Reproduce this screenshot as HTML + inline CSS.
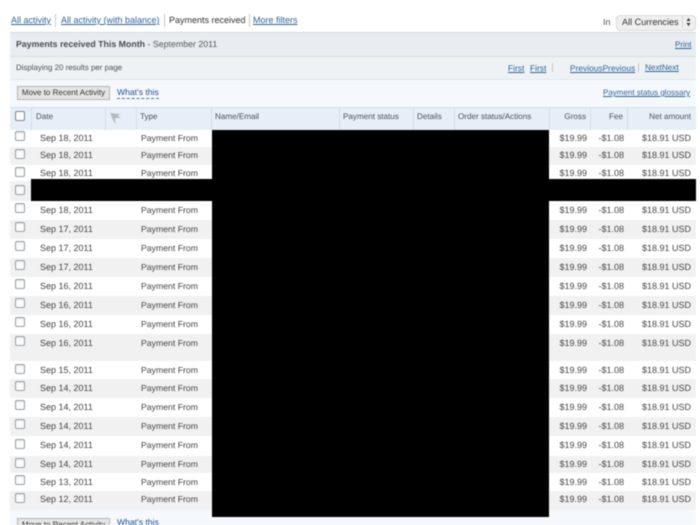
<!DOCTYPE html>
<html>
<head>
<meta charset="utf-8">
<style>
html,body{margin:0;padding:0;width:700px;height:525px;overflow:hidden;background:#fff}
body{font-family:"Liberation Sans",sans-serif;font-size:9px;color:#444;position:relative;text-rendering:geometricPrecision}
#w{position:absolute;left:0;top:0;width:700px;height:525px;overflow:hidden;filter:blur(.45px)}
.a{position:absolute;white-space:nowrap;line-height:12px}
.l{color:#2d6299;text-decoration:underline}
.b{position:absolute;left:10px;width:686px}
.v{position:absolute;top:107px;width:1px;height:23px;background:#d3dee8}
.s{position:absolute;width:1px;background:#c4c8cb}
.r{position:absolute;left:10px;width:686px}
.r span{position:absolute;line-height:12px;white-space:nowrap;top:50%;margin-top:-7px}
.r i{position:absolute;left:5px;top:50%;margin-top:-8px;width:8px;height:8px;border:1px solid #979fa5;border-radius:2px;background:#fbfbfb;box-shadow:inset 0 1px 1px #e2e2e2}
.r.u span{margin-top:-6px}
.r.m span{margin-top:-8px}
.d{left:30px}.t{left:131px;width:60px;font-size:8.7px}
.g{right:109px}.f{right:72px}.n{right:5px}
.e{background:#f1f1f1}
.h{color:#4a5058;font-size:8.1px}
.btn{position:absolute;left:17px;width:91px;height:12px;background:#e5e5e5;border:1px solid #b5b5b5;color:#333;font-size:8px;line-height:12px;text-align:center;white-space:nowrap}
.w{position:absolute;left:117px;color:#26508f;font-size:8.6px;line-height:11px;white-space:nowrap}
</style>
</head>
<body>
<div id="w">
<span class="a l" style="left:11px;top:14px">All activity</span>
<div class="s" style="left:55px;top:14px;height:13px"></div>
<span class="a l" style="left:61px;top:14px">All activity (with balance)</span>
<div class="s" style="left:164px;top:14px;height:13px"></div>
<span class="a" style="left:169px;top:14px;color:#333">Payments received</span>
<div class="s" style="left:249px;top:14px;height:13px"></div>
<span class="a l" style="left:253px;top:14px">More filters</span>
<span class="a" style="left:603px;top:16px;color:#555">In</span>
<div style="position:absolute;left:616px;top:15px;width:78px;height:14px;background:#efefef;border:1px solid #dcdcdc;border-radius:4px"></div>
<span class="a" style="left:622px;top:16px;color:#333;font-size:9.1px">All Currencies</span>
<div class="s" style="left:682px;top:16px;height:12px;background:#d5d5d5"></div>
<svg style="position:absolute;left:686px;top:17px" width="5" height="10" viewBox="0 0 5 10"><path d="M.5 4 2.500 1 4.500 4zM.5 6 2.500 9 4.500 6z" fill="#333"/></svg>

<div class="b" style="top:32px;height:24px;background:#e9edf1;border-top:1px solid #d6dadd;box-sizing:border-box"></div>
<div class="b" style="top:56px;height:23px;background:#eef2f5;border-top:1px solid #d8dde0;box-sizing:border-box"></div>
<div class="b" style="top:79px;height:28px;background:#f5f9fd;border-top:1px solid #dfe5e9;box-sizing:border-box"></div>
<div class="b" style="top:107px;height:23px;background:#e6eff8;border-top:1px solid #d8e1e9;box-sizing:border-box"></div>
<div class="b" style="top:510px;height:15px;background:#f5f9fd"></div>

<span class="a" style="left:16px;top:38px;font-size:8.8px;font-weight:bold;color:#454c52">Payments received This Month <span style="font-weight:normal;color:#555">- September 2011</span></span>
<span class="a l" style="left:675px;top:39px;font-size:8px">Print</span>
<span class="a" style="left:16px;top:62px;font-size:7.9px;color:#4a4f55">Displaying 20 results per page</span>
<span class="a l" style="left:508px;top:62px;font-size:8.4px">First</span>
<span class="a l" style="left:530px;top:62px;font-size:8.4px">First</span>
<div class="s" style="left:552px;top:63px;height:9px"></div>
<span class="a l" style="left:570px;top:62px;font-size:8.4px">PreviousPrevious</span>
<div class="s" style="left:638px;top:63px;height:9px"></div>
<span class="a l" style="left:645px;top:62px;font-size:8.2px">NextNext</span>
<div class="btn" style="top:86px">Move to Recent Activity</div>
<span class="w" style="top:87px;border-bottom:1px dashed #4a72a8">What's this</span>
<span class="a l" style="left:603px;top:87px;font-size:8px">Payment status glossary</span>

<div class="v" style="left:31px"></div><div class="v" style="left:105px"></div><div class="v" style="left:136px"></div><div class="v" style="left:211px"></div><div class="v" style="left:339px"></div><div class="v" style="left:413px"></div><div class="v" style="left:454px"></div><div class="v" style="left:549px"></div><div class="v" style="left:590px"></div><div class="v" style="left:627px"></div>
<div style="position:absolute;left:15px;top:111px;width:8px;height:8px;border:1px solid #7d878e;border-radius:2px;background:#fbfbfb"></div>
<span class="a h" style="left:36px;top:111px">Date</span>
<svg style="position:absolute;left:109px;top:112px" width="13" height="12" viewBox="0 0 13 12"><path d="M1 1 11 2 9 4 11.500 6 6 6 6.500 11 5.500 11z" fill="#b4bbc0"/></svg>
<span class="a h" style="left:140px;top:111px">Type</span>
<span class="a h" style="left:215px;top:111px">Name/Email</span>
<span class="a h" style="left:343px;top:111px">Payment status</span>
<span class="a h" style="left:417px;top:111px">Details</span>
<span class="a h" style="left:458px;top:111px">Order status/Actions</span>
<span class="a h" style="right:114px;top:111px">Gross</span>
<span class="a h" style="right:77px;top:111px">Fee</span>
<span class="a h" style="right:9px;top:111px">Net amount</span>

<div class="r" style="top:130px;height:17px"><i></i><span class="d">Sep 18, 2011</span><span class="t">Payment From</span><span class="g">$19.99</span><span class="f">-$1.08</span><span class="n">$18.91 USD</span></div>
<div class="r e" style="top:147px;height:18px"><i style="margin-top:-7px"></i><span class="d">Sep 18, 2011</span><span class="t">Payment From</span><span class="g">$19.99</span><span class="f">-$1.08</span><span class="n">$18.91 USD</span></div>
<div class="r u" style="top:165px;height:16px"><i style="margin-top:-6px"></i><span class="d">Sep 18, 2011</span><span class="t">Payment From</span><span class="g">$19.99</span><span class="f">-$1.08</span><span class="n">$18.91 USD</span></div>
<div class="r e" style="top:181px;height:20px"><i style="margin-top:-6px"></i></div>
<div class="r" style="top:201px;height:19px"><i></i><span class="d">Sep 18, 2011</span><span class="t">Payment From</span><span class="g">$19.99</span><span class="f">-$1.08</span><span class="n">$18.91 USD</span></div>
<div class="r e" style="top:220px;height:19px"><i></i><span class="d">Sep 17, 2011</span><span class="t">Payment From</span><span class="g">$19.99</span><span class="f">-$1.08</span><span class="n">$18.91 USD</span></div>
<div class="r" style="top:239px;height:19px"><i></i><span class="d">Sep 17, 2011</span><span class="t">Payment From</span><span class="g">$19.99</span><span class="f">-$1.08</span><span class="n">$18.91 USD</span></div>
<div class="r e" style="top:258px;height:19px"><i></i><span class="d">Sep 17, 2011</span><span class="t">Payment From</span><span class="g">$19.99</span><span class="f">-$1.08</span><span class="n">$18.91 USD</span></div>
<div class="r" style="top:277px;height:19px"><i></i><span class="d">Sep 16, 2011</span><span class="t">Payment From</span><span class="g">$19.99</span><span class="f">-$1.08</span><span class="n">$18.91 USD</span></div>
<div class="r e" style="top:296px;height:19px"><i></i><span class="d">Sep 16, 2011</span><span class="t">Payment From</span><span class="g">$19.99</span><span class="f">-$1.08</span><span class="n">$18.91 USD</span></div>
<div class="r" style="top:315px;height:19px"><i></i><span class="d">Sep 16, 2011</span><span class="t">Payment From</span><span class="g">$19.99</span><span class="f">-$1.08</span><span class="n">$18.91 USD</span></div>
<div class="r e" style="top:334px;height:27px"><i style="top:0;margin-top:2px"></i><span class="d" style="top:0;margin-top:3px">Sep 16, 2011</span><span class="t" style="top:0;margin-top:3px">Payment From</span><span class="g" style="top:0;margin-top:3px">$19.99</span><span class="f" style="top:0;margin-top:3px">-$1.08</span><span class="n" style="top:0;margin-top:3px">$18.91 USD</span></div>
<div class="r u" style="top:361px;height:18px"><i style="margin-top:-6px"></i><span class="d">Sep 15, 2011</span><span class="t">Payment From</span><span class="g">$19.99</span><span class="f">-$1.08</span><span class="n">$18.91 USD</span></div>
<div class="r e" style="top:379px;height:19px"><i></i><span class="d">Sep 14, 2011</span><span class="t">Payment From</span><span class="g">$19.99</span><span class="f">-$1.08</span><span class="n">$18.91 USD</span></div>
<div class="r" style="top:398px;height:19px"><i></i><span class="d">Sep 14, 2011</span><span class="t">Payment From</span><span class="g">$19.99</span><span class="f">-$1.08</span><span class="n">$18.91 USD</span></div>
<div class="r e" style="top:417px;height:19px"><i></i><span class="d">Sep 14, 2011</span><span class="t">Payment From</span><span class="g">$19.99</span><span class="f">-$1.08</span><span class="n">$18.91 USD</span></div>
<div class="r" style="top:436px;height:20px"><i style="margin-top:-7px"></i><span class="d">Sep 14, 2011</span><span class="t">Payment From</span><span class="g">$19.99</span><span class="f">-$1.08</span><span class="n">$18.91 USD</span></div>
<div class="r e" style="top:456px;height:17px"><i style="margin-top:-7px"></i><span class="d">Sep 14, 2011</span><span class="t">Payment From</span><span class="g">$19.99</span><span class="f">-$1.08</span><span class="n">$18.91 USD</span></div>
<div class="r u" style="top:473px;height:18px"><i style="margin-top:-7px"></i><span class="d">Sep 13, 2011</span><span class="t">Payment From</span><span class="g">$19.99</span><span class="f">-$1.08</span><span class="n">$18.91 USD</span></div>
<div class="r e m" style="top:491px;height:19px"><i></i><span class="d">Sep 12, 2011</span><span class="t">Payment From</span><span class="g">$19.99</span><span class="f">-$1.08</span><span class="n">$18.91 USD</span></div>

<div style="position:absolute;left:212px;top:130px;width:337px;height:387px;background:#000"></div>
<div style="position:absolute;left:31px;top:179px;width:665px;height:22px;background:#000"></div>

<div class="btn" style="top:518px">Move to Recent Activity</div>
<span class="w" style="top:517px">What's this</span>
</div>
</body>
</html>
